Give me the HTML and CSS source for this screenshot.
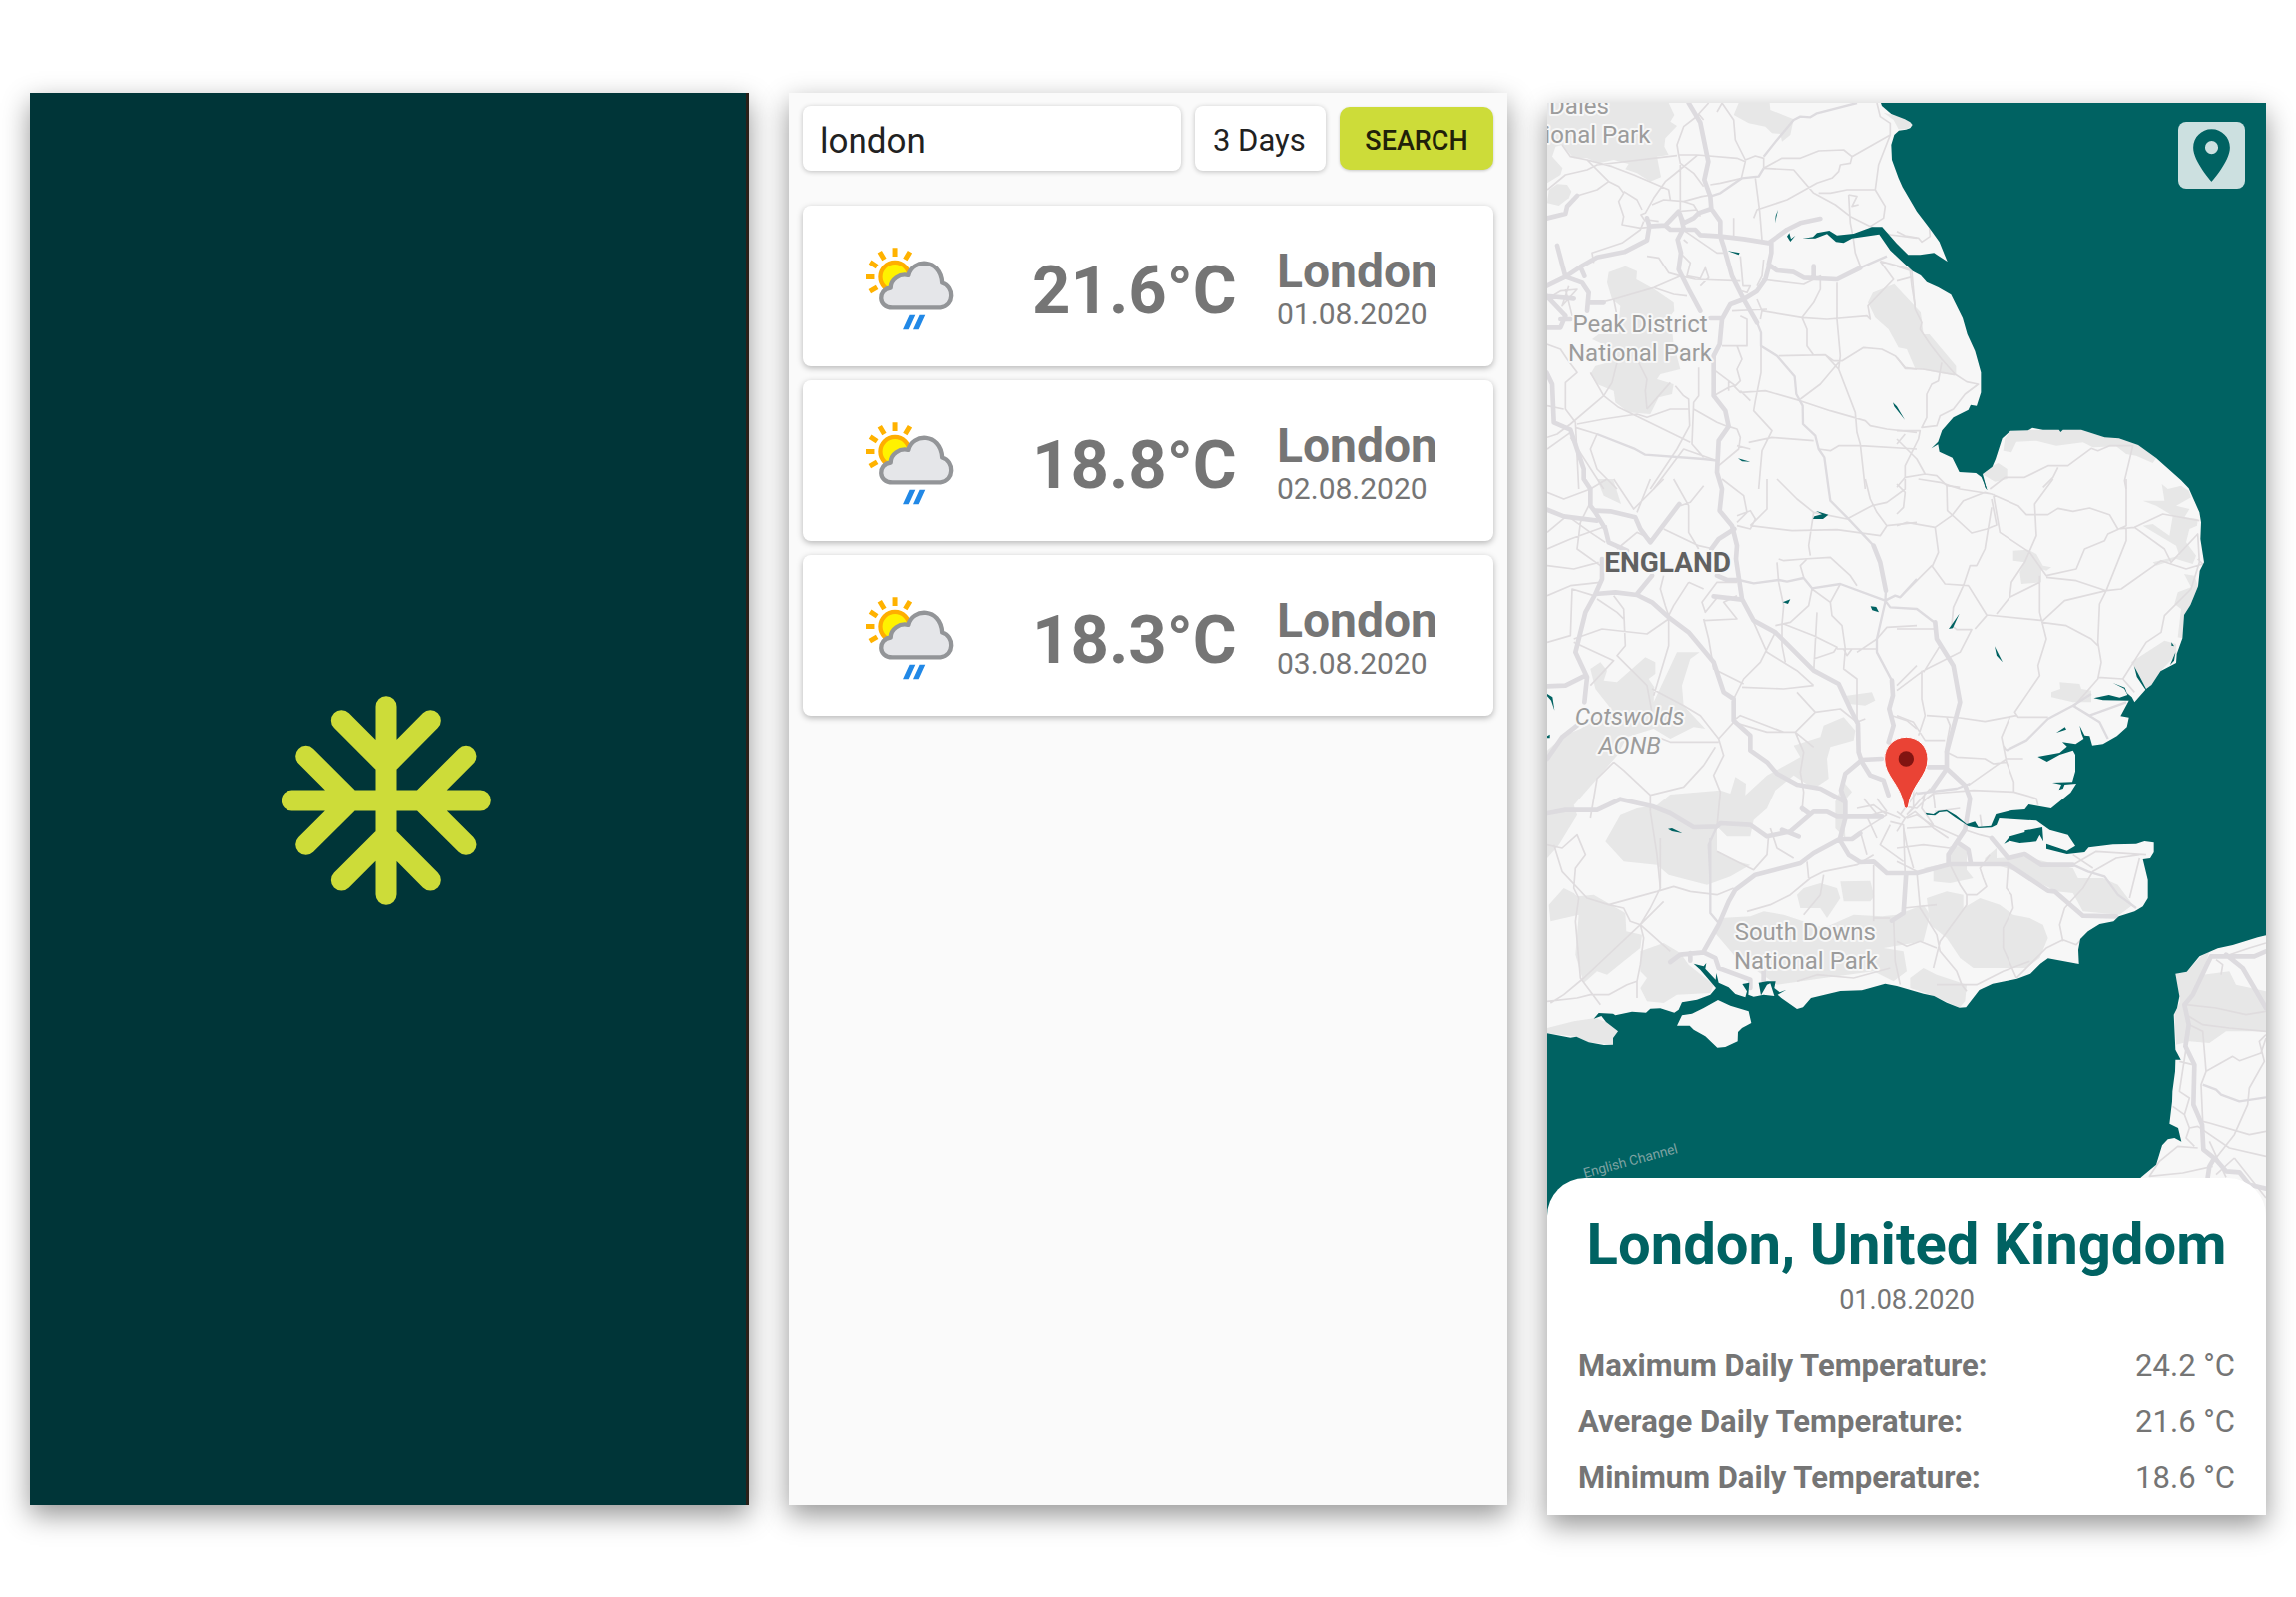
FILE: index.html
```html
<!DOCTYPE html>
<html lang="en">
<head>
<meta charset="utf-8">
<meta name="viewport" content="width=device-width, initial-scale=1">
<title>Weather</title>
<link rel="stylesheet" href="styles.css">
</head>
<body>
<svg class="defs" aria-hidden="true">
  <symbol id="rain-icon" viewBox="84 36 264 268">
    <g stroke="#ffb200" stroke-width="15">
      <path d="M171 55V81M125 67L139 90M216 67L202 90M96 98L117 112M83 143H109M95 187L117 174"/>
    </g>
    <circle cx="171" cy="143" r="44" fill="#fff200" stroke="#ffae00" stroke-width="13"/>
    <path d="M163 236C120 236 118 182 158 176C158 150 186 132 211 138C222 88 308 84 313 161C350 172 350 230 308 236Z" fill="#e5e6e9" stroke="#939598" stroke-width="13" stroke-linejoin="round"/>
    <path d="M215 258H232L212 302H195ZM245 258H262L242 302H225Z" fill="#2188e6"/>
  </symbol>
</svg>
<main class="screens">
  <section class="screen splash" aria-label="Splash">
    <svg class="flake" viewBox="67 50 630 630" role="img" aria-label="Snowflake">
      <path d="M98 365H665M382 82V648M248 124L382 258L515 124M248 605L382 471L515 605M141 231L275 365L141 498M622 231L488 365L622 498"/>
    </svg>
  </section>

  <section class="screen forecast" aria-label="Forecast">
    <form class="search">
      <input class="field city" type="text" value="london" aria-label="City">
      <select class="field days" aria-label="Days"><option>3 Days</option></select>
      <button class="go" type="button">SEARCH</button>
    </form>
    <article class="card">
      <svg class="icon"><use href="#rain-icon"/></svg>
      <p class="temp">21.6°C</p>
      <div><h2 class="place">London</h2><p class="date">01.08.2020</p></div>
    </article>
    <article class="card">
      <svg class="icon"><use href="#rain-icon"/></svg>
      <p class="temp">18.8°C</p>
      <div><h2 class="place">London</h2><p class="date">02.08.2020</p></div>
    </article>
    <article class="card">
      <svg class="icon"><use href="#rain-icon"/></svg>
      <p class="temp">18.3°C</p>
      <div><h2 class="place">London</h2><p class="date">03.08.2020</p></div>
    </article>
  </section>

  <section class="screen detail" aria-label="Details">
    <svg class="map" viewBox="30 39 2160 3366" role="img" aria-label="Map of England">
      <rect class="land" x="30" y="39" width="2160" height="3366"/>

      <!-- parks and forests -->
      <g class="park">
        <path d="M30 39H395L412 75L400 95L420 108L385 145L382 170L395 195L360 200L372 262L340 275L300 250L265 238L275 222L230 210L185 220L150 205L110 205L75 165L55 170L45 200L76 235L70 255L30 280Z"/>
        <path d="M35 300L60 283L90 285L103 305L95 325L65 348L30 340Z"/>
        <path d="M605 39H698L700 60L770 88L760 135L735 155L730 132L705 130L685 110L635 100L590 75Z"/>
        <path d="M1040 68L1105 84L1127 105L1110 118L1085 118L1070 90Z"/>
        <path d="M215 548L265 530L300 545L298 570L352 600L410 640L412 665L400 680L410 765L430 840L370 855L360 870L410 885L405 915L365 925L340 975L275 970L235 940L230 905L180 885L160 855L175 830L215 820L230 780L165 750L185 735L240 735L250 650L225 630L210 580Z"/>
        <path d="M1008 610L1072 584L1152 670L1160 735L1178 735L1258 830V858L1228 855L1135 838L1110 780L1085 775L1055 720L1015 685L993 640Z"/>
        <path d="M1336 1155L1358 1135L1385 1122L1412 1140V1170L1375 1178Z"/>
        <path d="M1405 1048L1422 1025L1520 1022L1635 1022L1705 1045L1748 1048L1806 1068L1860 1107L1850 1122L1800 1100L1770 1095L1740 1072L1670 1075L1640 1060L1560 1070L1500 1055L1440 1058L1425 1090L1400 1085Z"/>
        <path d="M1877 1185L1895 1200L1935 1190L1958 1205L1965 1225L1920 1250L1960 1260L1945 1285L1985 1290L1983 1310L1960 1320L1950 1360L1980 1400L1970 1425L1920 1410L1860 1430L1850 1420L1930 1400L1920 1370L1870 1340L1820 1310L1850 1305L1900 1340L1910 1280L1860 1250L1820 1235L1885 1235Z"/>
        <path d="M1944 1455L1975 1460L1986 1492L1963 1548L1944 1578L1939 1648L1925 1645L1935 1560L1915 1545L1925 1510L1965 1495Z"/>
        <path d="M1785 1720L1885 1655L1920 1665L1922 1695L1873 1747L1846 1788L1830 1800Z"/>
        <path d="M1545 1810L1572 1800L1570 1780L1630 1785L1635 1800L1665 1805V1840L1610 1840L1545 1825Z"/>
        <path d="M1430 1385L1475 1382L1500 1395L1520 1430L1545 1435L1530 1445L1515 1440L1515 1480L1455 1485L1450 1450L1465 1420L1430 1415Z"/>
        <path d="M180 1170H228L252 1245L200 1220Z"/>
        <path d="M160 1740L190 1720L210 1745L200 1775L240 1780L325 1705L355 1720V1755L335 1770L352 1795L350 1840L420 1690L460 1690L488 1690L460 1710L435 1790L440 1850L505 1920L470 1915L400 1950L350 1920L270 1945L240 2000L180 2070L110 2150L120 2180L65 2270L30 2310V1985L80 1940L130 1920L180 1890L230 1870L175 1800Z"/>
        <path d="M360 2150L400 2118L550 2105L580 2115L595 2065L627 2085L625 2120L690 2060L790 2005L770 1970L850 1945L860 1910L920 1885L955 1925L950 1955L880 1975L870 2010L875 2070L830 2100L770 2060L715 2105L690 2160L650 2195L640 2245L570 2245L540 2215L540 2290L600 2320L640 2330L580 2365L510 2390L395 2360L360 2330L260 2320L205 2260L250 2180L300 2160Z"/>
        <path d="M930 1820L1005 1810L1015 1835L985 1850L935 1845Z"/>
        <path d="M895 2140L920 2080L945 2110L920 2140L925 2250L895 2220Z"/>
        <path d="M35 2450L80 2400L110 2415L120 2425L170 2420L265 2475L268 2530L315 2540L310 2580L260 2620L210 2660L180 2650L140 2685L115 2600L125 2480L40 2500Z"/>
        <path d="M310 2590L380 2565L430 2595L455 2630L530 2690L520 2715L420 2720L380 2745L330 2740L310 2700L330 2670L310 2650Z"/>
        <path d="M30 2820L110 2800L175 2790L207 2802L243 2830L228 2870L155 2863L118 2846L30 2836Z"/>
        <path d="M800 2400L850 2385L900 2400L910 2430L870 2490L850 2460L790 2460L780 2420Z"/>
        <path d="M910 2380L1000 2378L1012 2425L1000 2440L920 2440Z"/>
        <path d="M530 2530L550 2490L640 2485L680 2470L740 2480L860 2520L950 2480L1035 2485L1080 2480L1160 2450L1180 2480L1160 2560L1040 2580L1100 2590L1110 2650L1070 2680L1010 2650L860 2670L720 2690L590 2600Z"/>
        <path d="M1170 2430L1230 2410L1280 2420V2460L1330 2430L1390 2450L1430 2480L1480 2490L1520 2510L1535 2550L1510 2610L1470 2640L1390 2640L1310 2640L1270 2610L1230 2550L1180 2510Z"/>
        <path d="M1120 2670L1160 2640L1200 2660L1290 2690L1285 2740L1268 2759L1192 2724L1120 2700Z"/>
        <path d="M1240 2275H1290V2345L1310 2370L1240 2385L1190 2380V2350L1160 2340L1230 2325Z"/>
        <path d="M1345 2310L1380 2280V2310L1460 2305L1610 2340L1625 2370L1700 2370L1745 2390L1790 2450L1750 2480L1640 2470L1610 2415L1560 2410L1440 2350L1345 2320Z"/>
        <path d="M1918 2657L1952 2651L1995 2605L2020 2590L2000 2660L2080 2650L2100 2690L2190 2710V2830L2070 2830L2020 2865L1960 2860L1920 2870L1915 2780L1932 2740Z"/>
      </g>

      <!-- secondary roads, north to south -->
      <g class="road minor">
        <path d="M515 39L485 72L500 90M555 39L590 90L595 150L625 210L655 198L680 205L680 235M540 66L555 40M485 75L440 110L420 165L425 195L480 195L600 205L625 215L613 265M75 165L100 200L150 210L215 275L180 300L120 318M30 300L85 255L150 240L180 225L420 197M215 275L245 290L260 310L245 335L260 380L255 405L310 415L385 407M150 210L225 230L290 255L395 300L400 330M480 197L410 255L385 275L350 325L325 370L312 375L325 395M425 195L430 220L470 250L500 290M430 225L430 360M680 235L770 240L830 310L895 345L940 380L1000 410L1060 435L1140 445M680 235L735 205L790 205L845 183L920 180L945 200L1060 135M945 200L940 220L910 225L905 245L885 265L840 280L750 330L660 360L650 385M655 265L668 365L675 450M520 285L550 280L615 265M845 310L880 310L930 300L1015 300L1045 350L1040 385L1000 410M1015 300L1025 225L1060 135L1060 100L1030 80L1020 39M935 315L960 320L945 350L965 345M935 315L940 400L948 440L955 490L970 530"/>
        <path d="M260 305L300 330L315 360M320 395L310 420L255 460L165 490L170 520M330 390L365 395M345 345L380 330L440 335L495 320L525 315M440 335L470 345L485 370M425 365L480 360L490 380M440 450L452 460M445 425L540 490L560 490M330 500L365 505L395 550L430 560L475 570L610 575M430 490L460 520L450 560L490 567L505 535L515 565L490 590M590 385L590 440M610 500L618 590L640 590L630 610L615 605M680 510L675 560L660 590M675 570L800 585L850 560L850 600L830 640L795 685M900 580L900 690L910 800L905 840L955 970L960 1030L970 1065L985 1200M660 630L675 665L670 690M585 665L690 660M675 665L795 685L810 720L810 770L830 798M795 685L870 690L990 680L1000 690L993 650L1070 570L1030 515M1030 515L1140 545M1120 545L1125 590L1135 650M725 800L865 797L890 815L915 815L980 775L1035 780L1075 800L1105 835L1140 840M865 797L905 840M905 820L850 885L790 930M555 770L630 770L630 690L610 680M600 770L615 810L600 840L610 875L595 890L535 845M530 920L575 895L590 890L610 910L685 905L790 935L880 965L985 995L1000 1010L1050 1020L1140 1030M610 905L640 935M655 935L650 965L705 1025L675 1085L665 1200M655 935L672 850L672 770M595 890L575 875V905M575 1012L600 1020L610 1045L605 1080L545 1130M600 1070L640 1080M635 1060L705 1045L830 1055M845 1080L880 1085L905 1070L970 1070L1140 1080"/>
        <path d="M240 680L230 630L350 595L410 615L450 620M350 595L430 560M190 640L230 630M28 630L70 605L120 600L75 650L95 590M85 600L105 680M28 765L70 780L90 810L120 850L85 880L85 960L115 1000M240 820L225 880L200 920L100 1005L60 1035L30 1045M160 850L200 920L245 955L460 1060M305 820L330 870L325 905L330 960M330 960L400 880M415 890L440 920L455 930L458 1010L420 1080L340 1200M485 835L485 920L470 940L465 1065L500 1105M470 960L540 1000L570 1012M30 950L80 960M120 1005L200 990L300 975L330 985L400 960L458 960M115 1015L180 1035L160 1080L180 1140L240 1200M100 1045L200 1200M115 1000L125 1200M540 1115L440 1080L350 1200M30 1080L100 1030"/>
        <path d="M30 1330L90 1280L160 1330L205 1360M30 1210L80 1230L160 1200L210 1170M30 1430L110 1440L185 1420M160 1240L130 1300L120 1380L190 1430M30 1380L100 1350L210 1310M340 1170L300 1270M230 1170L290 1260L380 1170M410 1170L455 1250V1330L485 1380M380 1320L485 1370L530 1380M240 1380L300 1330L340 1350M430 1250L460 1240L500 1190M555 1170L620 1220L630 1270L600 1300M600 1280L640 1265L655 1290L640 1320L600 1310M640 1310L690 1260L690 1170M640 1310L765 1325L900 1322L1030 1340L1050 1310L1140 1300M720 1170L780 1230L830 1270L815 1370L820 1400M830 1270L930 1290L1005 1250L1050 1240L1105 1200L1105 1170M985 1170L1000 1230L1020 1270L1050 1310M725 1410L740 1415L800 1410L880 1405L940 1460L960 1490M720 1420L725 1480M800 1465L790 1430L810 1410M825 1500L815 1550L760 1600L715 1610M825 1500L880 1540L885 1580L915 1610L925 1680L920 1740L960 1770L960 1900L985 1890M880 1540L910 1485M840 1570L830 1750M725 1480L740 1550L735 1605L735 1670L745 1720M740 1605L830 1640L900 1675L890 1690L830 1710M650 1600L690 1690L780 1745L830 1790M715 1630L670 1720L620 1770L590 1830M615 1795L740 1800L830 1790M900 1680H1020M920 1680L930 1700L945 1680M1140 1610L1050 1615L1020 1650L960 1690M1080 1790L1140 1730M1065 1880L1110 1895L1140 1920"/>
        <path d="M500 1590L515 1650L530 1740L620 1785M500 1595L600 1590L560 1540L600 1520M545 1520L505 1570L495 1540L540 1480L600 1480M455 1480L410 1550L395 1580V1670L350 1820M455 1480L500 1500M380 1460L370 1500L385 1550L395 1580M230 1520L260 1560L265 1670L240 1700L330 1790L345 1870M180 1530L240 1570L260 1590M110 1650L195 1620L330 1635L395 1590M30 1660L100 1640L105 1500L170 1520M110 1660L230 1715L160 1790M30 1520L100 1490L190 1480M345 1800L440 1850L490 1880L545 1950L560 2000L530 2060L550 2110L540 2215M545 1950L590 1900L690 1930L775 1930L830 1975M230 2020L260 2045L340 2120L340 2170M340 2120L440 2095L500 2030L535 1975M230 2020L180 2070L160 2190M545 1960L400 1960L350 1940M775 1930L800 1990L790 2050L800 2110L795 2170M590 1895L610 1880L740 1930M775 1930L835 1870L910 1860L960 1900M835 1870L780 1810M340 2170L360 2300L370 2400"/>
        <path d="M30 2270L75 2280L120 2240L145 2300L115 2340L110 2400L125 2430L115 2500L130 2670L190 2750M50 2270L75 2350L150 2430L215 2450L360 2410L410 2395L460 2410L540 2420L590 2400M215 2450L260 2460L280 2500L310 2510L320 2550L310 2630L300 2680L300 2730M310 2510L380 2440M310 2510L400 2590M310 2510L140 2670L80 2720L40 2745M30 2740L120 2730L160 2720L215 2720L270 2690L300 2680M370 2250V2400L340 2460L310 2510M540 2290L580 2310L650 2345L690 2300L695 2240M700 2220L720 2280L770 2310M810 2320L815 2370M630 2470L700 2450L760 2420L820 2370L860 2350L960 2330L1010 2300M860 2360L850 2420L800 2480M1010 2330L1010 2500M1070 2490L1075 2620L1090 2690M780 2680L840 2660L950 2670L1060 2640M1010 2490L1060 2490M1100 2460L1200 2450"/>
        <path d="M1080 2320L1140 2350L1150 2460L1200 2540L1210 2590L1260 2650L1275 2690L1290 2710M1240 2330L1270 2390L1290 2420L1290 2450L1210 2560L1190 2640M1340 2370L1350 2395L1320 2420L1290 2420M1340 2370L1330 2340L1360 2300M1415 2330L1410 2400L1425 2420L1430 2460L1400 2520L1400 2580L1440 2670M1080 2560L1110 2575L1150 2560L1200 2580M1200 2690L1320 2690L1400 2650L1480 2620M1440 2670L1530 2580L1580 2555L1620 2570L1660 2530M1585 2460L1570 2510L1580 2560M1585 2460L1640 2400L1670 2350L1740 2310L1810 2300M1610 2330L1680 2290L1830 2300M1810 2310L1780 2430M1670 2340L1610 2300"/>
      </g>
      <g class="road minor" transform="translate(1080 0)">
        <path d="M0 425L25 438L65 445L75 457L100 440L98 415M0 530L45 545L55 660L75 700L70 720L100 765L135 810L175 855L210 878L245 885L205 915L170 960L130 980L120 1010L75 1015L90 985L90 915L105 885L125 875L135 820M0 575L45 563M0 805L25 838L80 840L175 857M0 1025L70 1025L65 1050L25 1130L25 1165L0 1195M0 1050L60 1110L85 1155L25 1165M85 1155L120 1160L150 1190L190 1195M0 1065L25 1035M690 1200L685 1175L710 1070L640 1070L605 1085L585 1078L515 1130L455 1130L385 1165L325 1165L280 1200M485 1135L470 1165L440 1195"/>
      </g>
      <g class="road minor" transform="translate(1080 1170)">
        <path d="M0 15L25 40L20 85L0 105M65 0L130 10L190 30L285 45L365 80L390 107H455L485 88L530 97L580 87L640 107L665 150L715 145L800 105L910 125M285 45L265 40L200 65L165 110L115 145L30 130L0 140M150 15L152 95L225 162L270 150L300 138L285 60M285 85L265 210L240 260L220 260L200 320L170 385L165 440L180 452H225L190 520L80 575L0 635M470 0L415 75L420 170L385 250L345 310L340 355L300 405M290 45L310 160L400 220L450 290L540 270L565 210L625 185L635 165L690 140L690 0M690 150L690 185L630 335L610 375L605 490L615 550L605 600L535 680M450 295L540 305L630 335L675 330L795 245L870 270L920 255L905 240M715 145L805 210L825 250L905 165L910 250L885 330L805 410L795 460L750 490L680 600L715 640M430 290L430 400L450 480L425 560L430 590L355 700L365 715L455 715M630 335L505 365L440 425L270 408L215 320L145 315L105 260L10 355M435 430L510 440L585 480L605 500M270 410L235 450M115 145L125 220L105 265M340 355L430 310M75 575L75 660L85 710L65 770M0 450H120M80 580L130 500M0 710L50 730L85 785L145 785M90 710L190 717L265 728L360 710M340 715L315 775L330 850L290 855L265 840L180 835L150 820M330 840L300 860L215 920M330 840H380M330 850L352 910V940L230 935L110 945M352 940L420 960L425 980M605 595L680 600M315 775L320 800L330 815"/>
        <path d="M30 985L60 990L90 960L110 945L115 990M30 1020L60 1010L105 1040L195 1080M20 1050L30 1100L50 1170M30 1050L110 1045M0 1110L80 1100L160 1110M50 925L50 990L35 1005M115 1000L190 990M205 1055L250 1070L290 1080M85 940L75 990L110 1040M150 715L160 740L145 820M30 1010L100 930M250 1010L255 1045"/>
        <path d="M0 1000L25 1020L0 1060M25 1020L55 1000L110 1050L155 1080M10 1020L-40 1000L-90 1015L-60 1080M-30 1010L-70 980L-120 990M-30 1010L-110 1060L-90 1130M-20 1040L-50 1100L20 1150M-20 1030L20 1040L25 1190M-60 960L-30 1000M-100 960L-50 1020M60 940L10 1010"/>
      </g>
      <g class="road minor" transform="translate(1080 2250)">
        <path d="M1110 315L1060 330L1000 350M870 500L960 510L1050 530L1110 520M870 530L920 560L1000 570L1110 580M880 560L920 580L930 700L915 740L920 850L940 855L1060 890L1110 880M930 700L1010 655L1030 668L1095 645L1110 600M1110 590L1090 610L1105 670L1060 750L1055 800L1015 890L960 960M870 630L850 760L880 780L865 830L880 870L870 900L895 925M880 870L905 865L1000 930L1110 955M830 805L865 830M905 930L845 925L790 970L760 1015L860 1005L950 985M1015 960L1110 1080M1015 960L960 1010M940 910L990 1018M960 365L980 380L975 410M850 670L890 680"/>
      </g>

      <!-- trunk roads -->
      <g class="road mid">
        <path d="M520 320L550 310L615 265L665 260L680 235M680 200L720 150L770 90L790 80L820 82L840 70L960 39M180 1035L290 1078L325 1097L500 1110L540 1115M660 700L672 730V770L720 800L773 862L778 915L797 950L798 1005L835 1040L845 1080L862 1105L875 1200L880 1235L930 1285L1010 1370M1047 1505L1045 1540L1020 1650V1690L1065 1775M605 1473L650 1483L725 1473L750 1478L800 1467L825 1498L910 1485L1045 1535L1060 1555L1140 1560L1195 1602M1045 1535L1075 1520L1090 1525L1140 1470M520 2250V2475L545 2505M520 2370L515 2270L540 2215M970 535L1050 500M1410 1985L1470 1955L1535 1890L1610 1850L1665 1815M1610 1850L1690 1900L1715 1950M1610 1850L1660 1880L1770 1840M1610 2330L1655 2350L1705 2365L1745 2420L1800 2460M2000 2990L2040 3005L2055 3020L2110 3040L2190 3028M1140 2115L1260 2100L1300 2085"/>
      </g>
      <g class="road major">
        <path d="M455 39L490 98L514 215L502 270L520 320L523 357L550 395V440L560 470L585 560L620 630L660 700M28 386L85 372L90 350L120 318M28 590L85 562L130 532L180 503L262 487L330 452L337 410L385 407L425 365L440 400L470 385L485 370L523 357M330 385L337 410M385 407L400 420L475 420L490 436L550 440L620 448L695 460L750 420L790 400L850 387M430 375L440 415L422 450L432 490L425 540L455 600L490 665M703 460V490L695 525L720 543L770 548L800 565L900 570L970 535M830 560V530M697 525L685 570L660 605L620 630L580 645L555 690L548 765L530 800V920L565 965L575 1012L545 1055L540 1150L555 1200L548 1265L585 1310L600 1370L597 1410L615 1530L650 1595L715 1630L830 1745L905 1785L940 1860L963 1905L965 1990L975 2020L1000 2060L1040 2075L1055 2120M60 468L85 562L135 580L155 610L150 665M155 640H200M130 532L142 560M28 620L110 628M28 620L85 680L70 715H28M70 690H100M520 687H550M28 850L45 885L50 1000L100 1022L140 1140V1170L160 1200V1250L175 1270L205 1320L215 1360L270 1385"/>
        <path d="M30 1262L80 1282L180 1295M175 1265L220 1267L295 1285L310 1320L340 1360L427 1245M195 1410V1470L175 1515L145 1570L115 1690L150 1765L142 1840M30 1792L85 1790L145 1760M175 1515L235 1510L300 1518L345 1540L395 1585L455 1630L530 1720L560 1810L590 1830V1895L640 1940V1985L690 2020L720 2055L780 2088L850 2100L925 2140V2190L908 2255L935 2300L970 2322L1010 2320L1050 2355H1140L1240 2328H1415L1535 2408L1555 2410L1640 2483L1740 2485M300 1515L345 1460M523 1380L545 1350L592 1320M530 1522L615 1532M540 1460L570 1473H605M30 2175L85 2165H180L250 2132L350 2155L400 2175L470 2217L540 2215L550 2205L640 2210L690 2245L760 2230L830 2170H870L900 2185H1035M735 2225L785 2245M795 2160L820 2178M1035 2010L975 2013L925 2055L912 2105L925 2140M908 2253H945L970 2235M910 2252L830 2295L790 2325L655 2360L595 2405L575 2440L545 2510L500 2590M1010 1370L1030 1420L1047 1505M1065 1775L1068 1820L1057 1860L1070 1910L1055 1960M30 2010L75 1945L120 1910M400 2622L430 2600L500 2593L535 2610L545 2640L640 2675V2700M460 2595V2618M1108 2355L1100 2475L1065 2498M680 2650V2680"/>
        <path d="M1195 1600L1200 1650L1250 1730L1270 1840L1230 1990V2040L1185 2105M1175 2035H1225L1285 2090L1300 2130L1285 2225L1235 2300V2325M1265 2265L1295 2285L1302 2325M1365 2250L1415 2310L1465 2298L1515 2330H1610M2025 2605L1970 2720L1945 2750L1958 2810L1948 2875L1975 2930L1972 3050L1998 3110L2002 3185L2040 3215L2070 3250L2110 3253L2140 3290L2190 3302M2025 2605H2155L2190 2590M2070 2600L2120 2640L2190 2760M2035 3210L2020 3235L2015 3268"/>
      </g>

      <!-- sea, estuaries and reservoirs -->
      <path class="water" d="M1032 39L1035 48L1063 72L1104 88L1120 97L1127 105L1120 115L1108 119L1086 122L1072 135L1063 165L1065 210L1085 265L1097 292L1140 365L1180 418L1208 457L1232 516L1192 490L1150 496H1114L1080 462L1036 412H1005L950 432L900 437L877 423L840 430L828 442L796 447L835 446L870 433L897 457L920 460L945 446L1027 434L1060 482L1100 520L1128 545L1152 558L1170 578L1205 594L1243 616L1278 686L1292 735L1315 785L1333 850V910L1320 950L1302 947L1295 962L1250 985L1216 1024L1204 1058L1184 1078L1204 1066L1208 1088L1247 1106L1268 1149L1318 1152L1334 1164L1351 1204L1338 1155L1367 1133L1377 1110L1397 1048L1422 1025L1475 1024L1488 1016L1520 1022H1568L1573 1029L1580 1022H1635L1705 1045L1748 1048L1806 1068L1860 1107L1935 1174L1958 1198L1990 1270L1995 1300L1993 1350L2004 1420L1991 1445L1986 1492L1963 1548L1944 1578L1939 1648L1922 1695L1920 1722L1873 1747L1846 1788L1830 1800L1810 1762L1794 1732L1802 1764L1828 1802L1795 1840L1787 1825L1772 1812L1766 1796L1730 1782L1764 1799L1774 1818L1750 1826L1718 1818L1672 1828L1700 1834L1778 1835L1753 1882L1778 1886L1772 1915L1742 1942L1700 1966L1668 1970L1660 1942L1645 1940L1630 1910L1636 1935L1642 1950L1618 1966L1578 1960L1592 1973L1570 1992L1504 2004L1532 2019L1570 1998L1610 1985L1617 1998V2048L1608 2080L1548 2082L1575 2088L1568 2104L1580 2100L1585 2088L1620 2085L1603 2112L1544 2160L1477 2148L1465 2163L1425 2166L1378 2178L1363 2213L1325 2216L1315 2200L1290 2208L1258 2182L1230 2165L1205 2168L1190 2178L1166 2174L1170 2180L1195 2182L1208 2172L1230 2170L1255 2188L1295 2214L1325 2220L1365 2218L1380 2210L1388 2190L1500 2197L1540 2225L1595 2240L1617 2273L1592 2288L1530 2267V2282L1592 2298L1645 2292L1657 2278L1730 2269L1800 2267L1825 2259L1853 2263V2292L1842 2310L1820 2313L1835 2375V2430L1820 2455L1795 2470L1748 2485L1732 2500L1690 2508L1655 2530L1632 2553L1626 2585L1628 2628L1535 2611L1512 2627L1482 2657L1442 2672L1368 2687L1328 2706L1288 2758L1268 2759L1230 2744L1192 2724L1160 2717L1080 2694L1045 2687L975 2707L910 2709L822 2730L798 2758L780 2763L733 2730L722 2720L748 2705L728 2713L712 2700L716 2680H690L665 2684L672 2722L690 2690L700 2686L712 2724L680 2720L650 2726L634 2720L637 2684L616 2688L630 2710L625 2728L595 2718L575 2698L545 2684L538 2655L536 2675L505 2642L508 2625L500 2635L470 2627L490 2645L537 2700L520 2720L480 2735L435 2743L425 2765L412 2774L370 2761L340 2762L327 2774L285 2771L235 2782L228 2777L185 2775L170 2792L193 2784L207 2802L243 2830L228 2850V2870L200 2871L155 2863L118 2846L100 2849L30 2836V3405H1700L1815 3268L1860 3230L1878 3172L1895 3154L1915 3150L1936 3161L1926 3120L1900 3107L1908 3040L1909 3010L1917 2950L1918 2915H1934L1918 2885L1913 2780L1923 2760L1930 2725L1918 2657L1952 2651L1990 2605L2045 2581L2090 2571L2165 2548L2190 2542V39Z"/>
      <path class="water" d="M1402 2267L1420 2245L1465 2232V2227L1518 2217L1521 2260L1510 2240L1500 2260L1450 2265L1420 2258ZM1560 1932L1586 1915L1590 1922ZM723 360L714 400L716 378ZM750 440L757 430L762 448L775 438L760 456ZM572 484L608 490L605 496ZM1068 940L1080 952L1104 992L1072 952ZM603 1108L640 1118L615 1117ZM836 1265L874 1277L858 1290H828L832 1282L855 1276ZM737 1540L760 1531L753 1545ZM1001 1552L1018 1554L1026 1570L1006 1564ZM1268 1574L1248 1618L1236 1620ZM1374 1672L1398 1720L1380 1700ZM393 2222L405 2220L436 2235L405 2229ZM30 1815L46 1825L52 1865L42 1835L30 1822ZM30 1942L38 1937V1948H30ZM1340 1170L1352 1204L1345 1195ZM1906 1660L1914 1672L1906 1670ZM1918 1690L1914 1715L1902 1728Z"/>
      <path class="land" d="M543 2736L580 2753L635 2770L643 2805L615 2820L603 2832L602 2860L565 2877L541 2879L505 2845L470 2825L458 2813H420L435 2782L465 2777L500 2760Z"/>

      <g class="label">
        <text x="126" y="71">Dales</text>
        <text x="340" y="158" text-anchor="end">National Park</text>
        <text x="309" y="728">Peak District</text>
        <text x="309" y="815">National Park</text>
        <text x="805" y="2556">South Downs</text>
        <text x="807" y="2643">National Park</text>
        <text class="slant" x="278" y="1907">Cotswolds</text>
        <text class="slant" x="278" y="1995">AONB</text>
        <text class="country" x="392" y="1449">ENGLAND</text>
      </g>
      <text class="sea-label" transform="translate(143 3270) rotate(-15)">English Channel</text>

      <path class="marker" d="M1108 1945C1070 1945 1043 1974 1043 2010C1043 2064 1092 2085 1102 2155Q1108 2166 1114 2155C1124 2085 1173 2064 1173 2010C1173 1974 1146 1945 1108 1945Z"/>
      <circle cx="1108" cy="2010" r="23" fill="#811411"/>
    </svg>
    <button class="locate" type="button" aria-label="Show location">
      <svg viewBox="0 0 24 24"><path d="M12 2C8.130 2 5 5.130 5 9c0 5.250 7 13 7 13s7-7.750 7-13c0-3.870-3.130-7-7-7zm0 9.500a2.500 2.500 0 1 1 0-5 2.500 2.500 0 0 1 0 5z"/></svg>
    </button>
    <div class="sheet">
      <h1 class="title">London, United Kingdom</h1>
      <p class="day">01.08.2020</p>
      <table class="stats">
        <tr><th scope="row">Maximum Daily Temperature:</th><td>24.2 °C</td></tr>
        <tr><th scope="row">Average Daily Temperature:</th><td>21.6 °C</td></tr>
        <tr><th scope="row">Minimum Daily Temperature:</th><td>18.6 °C</td></tr>
      </table>
    </div>
  </section>
</main>
</body>
</html>
```
FILE: styles.css
```css
* { box-sizing: border-box; }

body {
  margin: 0;
  background: #fff;
  color: #757575;
  font-family: Roboto, "Liberation Sans", sans-serif;
}

h1, h2, p { margin: 0; }

.defs { position: absolute; width: 0; height: 0; }

.screens {
  display: grid;
  grid-template-columns: repeat(3, minmax(0, 1fr));
  gap: 40px;
  padding: 93px 30px 80px;
}

.screen {
  margin-bottom: 10px;
  box-shadow: 0 10px 26px rgba(0, 0, 0, 0.42);
}

/* Splash */
.splash {
  display: flex;
  align-items: center;
  justify-content: center;
  padding: 2px 3px 0 0;
  background: #003538;
  border-right: 3px solid #2a2019;
}

.flake {
  width: 210px;
  height: 210px;
  fill: none;
  stroke: #cddc39;
  stroke-width: 63;
  stroke-linecap: round;
}

/* Forecast */
.forecast {
  display: flex;
  flex-direction: column;
  gap: 14px;
  padding: 13px 14px;
  background: #fafafa;
}

.search {
  display: flex;
  align-items: center;
  gap: 14px;
  margin-bottom: 21px;
}

.field {
  height: 65px;
  border: 0;
  border-radius: 8px;
  background: #fff;
  color: #212121;
  font-family: inherit;
  box-shadow: 0 1px 5px rgba(0, 0, 0, 0.24);
}

.city {
  flex: 1;
  min-width: 0;
  padding: 6px 17px 0;
  font-size: 35px;
}

.days {
  width: 131px;
  padding: 4px 0 0 18px;
  font-size: 31px;
  appearance: none;
}

.go {
  width: 154px;
  height: 63px;
  padding: 4px 0 0;
  border: 0;
  border-radius: 10px;
  background: #cddc39;
  color: #1f2109;
  font: 500 27px Roboto, "Liberation Sans", sans-serif;
  box-shadow: 0 1px 3px rgba(0, 0, 0, 0.2);
}

.card {
  display: grid;
  grid-template-columns: 230fr 245fr 217fr;
  align-items: center;
  height: 161px;
  border-radius: 8px;
  background: #fff;
  box-shadow: 0 2px 6px rgba(0, 0, 0, 0.28);
}

.icon {
  width: 88px;
  height: 89px;
  margin-left: 64px;
}

.temp {
  padding-top: 8px;
  font-size: 67px;
  font-weight: 700;
  line-height: 72px;
}

.place {
  padding-top: 8px;
  font-size: 48px;
  font-weight: 700;
  line-height: 48px;
}

.date {
  font-size: 30px;
  line-height: 38px;
}

/* Detail */
.detail {
  position: relative;
  margin: 10px 0 0;
  background: #fff;
}

.map {
  display: block;
  width: 100%;
}

.land { fill: #f7f7f7; }
.park { fill: #e7e7e7; }
.water { fill: #006262; }

.road {
  fill: none;
  stroke: #dddbdf;
  stroke-linejoin: round;
}

.minor { stroke: #dfdcde; stroke-width: 5; }
.mid { stroke-width: 7; }
.major { stroke-width: 14; stroke-linecap: round; }

.label {
  fill: #9c9c9c;
  stroke: #f7f7f7;
  stroke-width: 12;
  stroke-linejoin: round;
  paint-order: stroke;
  font-size: 72px;
  text-anchor: middle;
}

.slant { font-style: italic; }
.country { fill: #616161; font-size: 84px; font-weight: 700; }
.sea-label { fill: #7fa3a3; font-size: 41px; }

.marker {
  fill: #ea4335;
  stroke: #fff;
  stroke-width: 3;
}

.locate {
  position: absolute;
  top: 19px;
  right: 21px;
  display: grid;
  place-items: center;
  width: 67px;
  height: 67px;
  padding: 0;
  border: 0;
  border-radius: 8px;
  background: #cce0e0;
}

.locate svg {
  width: 63px;
  height: 63px;
  fill: #006262;
}

.sheet {
  position: relative;
  margin-top: -45px;
  padding: 33px 31px 9px;
  border-radius: 38px 38px 0 0;
  background: #fff;
}

.title {
  color: #006262;
  font-size: 58px;
  font-weight: 700;
  line-height: 66px;
  text-align: center;
}

.day {
  margin: 7px 0 23px;
  font-size: 27px;
  line-height: 32px;
  text-align: center;
}

.stats {
  width: 100%;
  border-collapse: collapse;
  font-size: 31px;
  line-height: 56px;
}

.stats th {
  padding: 0;
  font-weight: 700;
  text-align: left;
}

.stats td {
  padding: 0;
  text-align: right;
}
```
